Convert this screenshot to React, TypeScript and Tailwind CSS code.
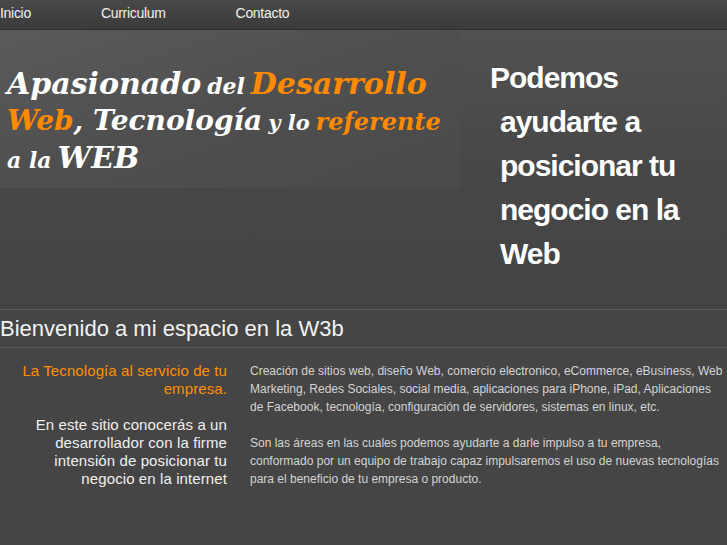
export default function App() {
  const big = "text-[30px]";
  const small = "text-[22px]";
  const line = "block h-[37px] leading-[37px] overflow-visible";
  return (
    <main className="min-h-[545px] w-[727px] overflow-hidden bg-[#454545] font-['Liberation_Sans',Arial,sans-serif]">
      {/* Navigation */}
      <nav className="flex h-[30px] items-center gap-[70px] border-b border-[#2e2e2e] bg-gradient-to-b from-[#484848] to-[#3b3b3b] pb-[3px]">
        <a href="#" className="text-[14px] tracking-[-0.3px] text-[#f0f0f0]">Inicio</a>
        <a href="#" className="text-[14px] tracking-[-0.3px] text-[#f0f0f0]">Curriculum</a>
        <a href="#" className="text-[14px] tracking-[-0.3px] text-[#f0f0f0]">Contacto</a>
      </nav>

      {/* Hero */}
      <section className="flex h-[279px] bg-gradient-to-b from-[#515151] via-[#474747] to-[#444444]">
        <div className="h-[158px] w-[460px] shrink-0 bg-gradient-to-br from-[#5a5a5a] via-[#4f4f4f] to-[#4a4a4a] pl-[7px] pt-[35px]">
          <h1 className="whitespace-nowrap font-['DejaVu_Serif',serif] text-[17px] font-bold italic leading-[37px] text-white">
            <span className={line}>
              <span className={big}>Apasionado</span>{" "}
              <span className={small}>del</span>{" "}
              <span className={`${big} text-[#ff8a00]`}>Desarrollo</span>
            </span>
            <span className={line}>
              <span className="text-[28px] text-[#ff8a00]">Web</span>
              <span className="text-[28px]">, Tecnología</span>{" "}
              <span className="text-[21px]">y lo</span>{" "}
              <span className="text-[24px] text-[#ff8a00]">referente</span>
            </span>
            <span className={line}>
              <span className={small}>a la</span>{" "}
              <span className={big}>WEB</span>
            </span>
          </h1>
        </div>
        <div className="w-[230px] pl-[30px] pt-[26px]">
          <p className="pl-[10px] -indent-[10px] text-[30px] font-bold leading-[44px] tracking-[-1px] text-white">
            Podemos ayudarte a posicionar tu negocio en la Web
          </p>
        </div>
      </section>

      {/* Welcome */}
      <h2 className="flex h-[39px] items-center border-y border-[#5a5a5a] text-[22px] text-[#f2f2f2]">
        Bienvenido a mi espacio en la W3b
      </h2>

      {/* Content */}
      <section className="flex gap-[23px] pt-[14px]">
        <div className="w-[227px] shrink-0 text-right text-[15px] leading-[18px] tracking-[0.1px]">
          <p className="text-[#ff9000]">La Tecnología al servicio de tu empresa.</p>
          <p className="mt-[18px] text-[#f0f0f0]">
            En este sitio conocerás a un desarrollador con la firme intensión de posicionar tu negocio en la internet
          </p>
        </div>
        <div className="flex-1 text-[12px] leading-[18px] text-[#d4d4d4]">
          <p>
            Creación de sitios web, diseño Web, comercio electronico, eCommerce, eBusiness, Web Marketing, Redes Sociales, social media, aplicaciones para iPhone, iPad, Aplicaciones de Facebook, tecnología, configuración de servidores, sistemas en linux, etc.
          </p>
          <p className="mt-[18px]">
            Son las áreas en las cuales podemos ayudarte a darle impulso a tu empresa, conformado por un equipo de trabajo capaz impulsaremos el uso de nuevas tecnologías para el beneficio de tu empresa o producto.
          </p>
        </div>
      </section>
    </main>
  );
}
